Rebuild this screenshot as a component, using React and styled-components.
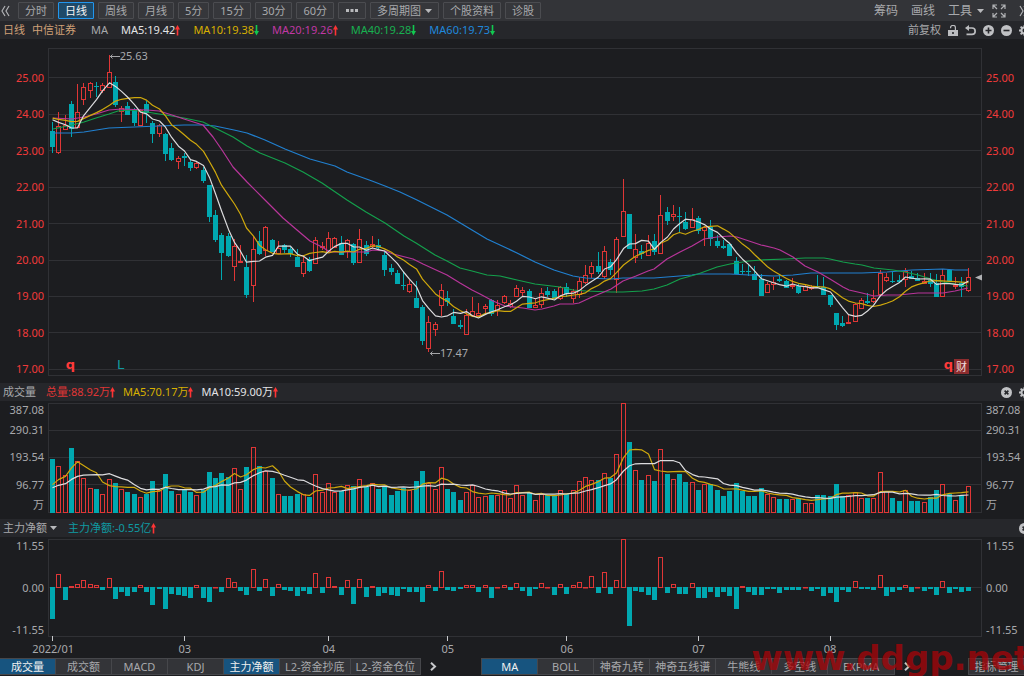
import React, { Component } from 'react'
import styled, { createGlobalStyle } from 'styled-components';

const GlobalStyle = createGlobalStyle`
  * {
    box-sizing: border-box;
  }

  body {
    margin: 0;
    background-color: #1c1d20;
    color: #a8a9ac;
    font-family: "Noto Sans", "Noto Sans CJK SC", sans-serif;
    font-size: 11px;
    line-height: 16px;
    overflow-x: hidden;
  }

  button, select {
    font: inherit;
    color: inherit;
    cursor: pointer;
  }
`;

const RED = '#e03636';
const TEAL = '#00a8b0';
const WHITE = '#dcdcde';
const YELLOW = '#cfa80c';
const MAGENTA = '#b8359a';
const GREEN = '#14a04c';
const BLUE = '#2180d0';

const Page = styled.main`
  width: 100%;
  overflow: hidden;
`;

const Toolbar = styled.header`
  display: flex;
  justify-content: space-between;
  align-items: center;
  height: 21px;
  padding-left: 1px;
  background-color: #333438;
`;

const Group = styled.div`
  display: flex;
  align-items: center;
  flex-shrink: 0;
  gap: ${props => props.$gap || 0}px;
`;

const PeriodButton = styled.button`
  display: flex;
  align-items: center;
  justify-content: center;
  gap: 4px;
  height: 17px;
  min-width: 28px;
  padding: 0 6px;
  white-space: nowrap;
  line-height: 15px;
  border: 1px solid ${props => props.$active ? '#2196ee' : '#4b4c50'};
  border-radius: 1px;
  background-color: ${props => props.$active ? '#1e4a69' : '#36373b'};
  color: ${props => props.$active ? '#f4f4f4' : '#a8a9ac'};
`;

const PlainButton = styled.button`
  display: flex;
  align-items: center;
  gap: 5px;
  padding: 0;
  border: 0;
  background: none;
  white-space: nowrap;
  font-size: ${props => props.$size || 11}px;
`;

const EdgeButton = styled(PlainButton)`
  margin-right: -6px;
`;

const InfoBar = styled.div`
  display: flex;
  justify-content: space-between;
  align-items: center;
  height: 18px;
  padding-left: 3px;
  background-color: #26272b;
  white-space: nowrap;
`;

const Reading = styled.span`
  display: inline-flex;
  align-items: center;
  color: ${props => props.$color};
`;

const Stock = styled.span`
  color: #d0a078;
  margin-right: ${props => props.$space || 0}px;
`;

const Title = styled.span`
  margin-right: 2px;
`;

const Picker = styled.label`
  display: flex;
  align-items: center;
  gap: 3px;

  select {
    appearance: none;
    padding: 0;
    border: 0;
    background: none;
  }
`;

const Panel = styled.section`
  display: grid;
  grid-template-columns: 48px minmax(0, 1fr) 42px;
`;

const Plot = styled.div`
  position: relative;
  padding: ${props => props.$padding};

  > svg {
    display: block;
    width: 100%;
    height: ${props => props.$height}px;
  }
`;

const Axis = styled.div`
  display: flex;
  flex-direction: column;
  justify-content: space-between;
  padding: ${props => props.$padding};
  text-align: ${props => props.$side};
  color: ${props => props.$color || '#a8a9ac'};
`;

const VolumeAxis = styled(Axis)`
  display: grid;
  grid-template-rows: 18px 22px 32px 23px 18px;
  justify-content: stretch;
  align-items: center;
`;

const Annotation = styled.span`
  position: absolute;
  left: ${props => props.$left}%;
  top: ${props => props.$top}px;
  display: flex;
  align-items: center;
`;

const Mark = styled.span`
  position: absolute;
  left: ${props => props.$left}%;
  top: 318px;
  font-family: "DejaVu Sans", sans-serif;
  font-size: 13px;
  font-weight: ${props => props.$bold ? 'bold' : 'normal'};
  color: ${props => props.$color};
`;

const Badge = styled.span`
  position: absolute;
  left: 97%;
  top: 320px;
  width: 15px;
  height: 15px;
  background-color: #8c2c2e;
  color: #f0dcdc;
  line-height: 15px;
  text-align: center;
`;

const Months = styled.div`
  display: grid;
  grid-template-columns: repeat(147, minmax(0, 1fr));
  height: 15px;
  padding: 0 11px 0 2px;
`;

const Month = styled.span`
  grid-column: ${props => props.$index + 1};
  justify-self: center;
  line-height: 13px;
`;

const Footer = styled.footer`
  position: relative;
  display: flex;
  align-items: center;
  height: 19px;
`;

const Tabs = styled.nav`
  display: flex;
  height: 17px;
  border: 1px solid #46474b;
  border-left-width: ${props => props.$flush ? 0 : 1}px;
`;

const Tab = styled.button`
  min-width: ${props => props.$wide ? 66 : 56}px;
  padding: 0 5px;
  border: 0;
  border-right: 1px solid #46474b;
  background-color: ${props => props.$active ? '#17547f' : '#333438'};
  color: ${props => props.$active ? '#f0f0f0' : '#a8a9ac'};
  line-height: 15px;
  white-space: nowrap;

  &:last-child {
    border-right: 0;
  }
`;

const MoreButton = styled(PlainButton)`
  justify-content: center;
  width: 24px;
  margin-right: ${props => props.$space || 0}px;
`;

const ManageButton = styled(Tab)`
  height: 17px;
  margin-left: auto;
  border: 1px solid #46474b;

  &:last-of-type {
    border-right: 0;
  }
`;

const Watermark = styled.span`
  position: absolute;
  right: -6px;
  bottom: 1px;
  font-family: "DejaVu Sans", sans-serif;
  font-size: 34px;
  font-weight: bold;
  line-height: 33px;
  color: rgba(168, 4, 8, 0.75);
  pointer-events: none;
`;

const Arrow = ({ down }) => (
  <svg width="5" height="11" viewBox="0 0 5 11" aria-hidden="true">
    <path
      d={down ? 'M1.7 0h1.6v6H5L2.5 10.5 0 6h1.7z' : 'M1.7 10.5h1.6V4.5H5L2.5 0 0 4.5h1.7z'}
      fill={down ? '#12c850' : '#ff3434'}
    />
  </svg>
)

const Caret = () => (
  <svg width="7" height="4" viewBox="0 0 7 4" aria-hidden="true"><path d="M0 0h7L3.5 4z" fill="#b8b9bc" /></svg>
)

const Chevrons = ({ right }) => (
  <svg width="11" height="12" viewBox="0 0 11 12" fill="none" stroke="#b0b1b4" strokeWidth="1.2" aria-hidden="true">
    <path d={right ? 'M1 1l3 5-3 5M5 1l3 5-3 5' : 'M4 1L1 6l3 5M8 1L5 6l3 5'} />
  </svg>
)

const Next = () => (
  <svg width="7" height="9" viewBox="0 0 7 9" fill="none" stroke="#c8c9cc" strokeWidth="2" aria-hidden="true">
    <path d="M1 .8l4 3.7-4 3.7" />
  </svg>
)

const Dots = () => (
  <svg width="12" height="3" viewBox="0 0 12 3" fill="#b8b9bc" aria-hidden="true">
    <path d="M0 0h3v3H0zM4.5 0h3v3h-3zM9 0h3v3H9z" />
  </svg>
)

const Expand = () => (
  <svg width="14" height="14" viewBox="0 0 14 14" fill="none" stroke="#b0b1b4" strokeWidth="1.2" aria-hidden="true">
    <path d="M1 5V1h4M1 1l4 4M9 1h4v4M13 1L9 5M1 9v4h4M1 13l4-4M13 9v4H9M13 13L9 9" />
  </svg>
)

const Lock = () => (
  <svg width="10" height="11" viewBox="0 0 10 11" aria-hidden="true">
    <path d="M2.6 3.2V2.4a2.4 2 0 0 1 4.8 0V5" fill="none" stroke="#bcbdc0" strokeWidth="1.2" />
    <path d="M0 5h10v6H0zM4.2 7v2h1.6V7z" fill="#bcbdc0" fillRule="evenodd" />
  </svg>
)

const Undo = () => (
  <svg width="11" height="11" viewBox="0 0 11 11" aria-hidden="true">
    <path d="M3 3h4a3 3 0 0 1 0 6.3H1.5" fill="none" stroke="#bcbdc0" strokeWidth="1.7" />
    <path d="M0 3l4-3v6z" fill="#bcbdc0" />
  </svg>
)

const SIGNS = {
  plus: 'M2.5 5.5h6M5.5 2.5v6',
  minus: 'M2.5 5.5h6',
  close: 'M3.6 3.6l3.8 3.8M7.4 3.6L3.6 7.4',
};

const Round = ({ sign }) => (
  <svg width="11" height="11" viewBox="0 0 11 11" aria-hidden="true">
    <circle cx="5.5" cy="5.5" r="5.5" fill="#c0c1c4" />
    <path d={SIGNS[sign]} stroke="#26272b" strokeWidth="1.6" />
  </svg>
)

const Gear = () => (
  <svg width="11" height="11" viewBox="0 0 11 11" fill="none" stroke="#c0c1c4" aria-hidden="true">
    <circle cx="5.5" cy="5.5" r="3" strokeWidth="2" />
    <path d="M5.5 0v2M5.5 9v2M0 5.5h2M9 5.5h2M1.6 1.6L3 3M8 8l1.4 1.4M9.4 1.6L8 3M3 8L1.6 9.4" strokeWidth="1.8" />
  </svg>
)

const Pointer = () => (
  <svg width="10" height="5" viewBox="0 0 10 5" fill="none" stroke="#a4a5a8" aria-hidden="true">
    <path d="M0 2.5h10M2.5 .5l-2 2 2 2" />
  </svg>
)

// high, body top, body bottom, low, 1 when the day closed up
const CANDLES = [
  [122, 131, 147, 153, 0], [112, 126, 152, 154, 1], [115, 125, 129, 130, 1], [101, 104, 129, 137, 0], [84, 112, 127, 128, 1],
  [83, 87, 99, 105, 1], [82, 83, 90, 98, 1], [82, 86, 87, 97, 0], [83, 85, 90, 93, 1], [55, 72, 87, 87, 1],
  [76, 82, 105, 107, 0], [106, 108, 111, 122, 1], [102, 106, 115, 115, 0], [108, 109, 123, 126, 0], [109, 110, 125, 126, 1],
  [101, 104, 113, 123, 0], [121, 123, 134, 143, 0], [124, 125, 133, 137, 1], [133, 134, 154, 161, 0], [143, 148, 160, 161, 0],
  [156, 158, 161, 169, 1], [153, 156, 158, 166, 0], [159, 162, 168, 171, 0], [161, 163, 167, 169, 1], [167, 170, 181, 183, 0],
  [185, 185, 217, 222, 0], [210, 215, 240, 242, 0], [233, 235, 253, 280, 0], [233, 236, 256, 257, 0], [239, 246, 266, 281, 1],
  [245, 261, 262, 263, 1], [255, 267, 295, 298, 0], [236, 249, 285, 302, 1], [231, 241, 254, 255, 0], [226, 227, 250, 256, 1],
  [239, 240, 252, 252, 0], [241, 248, 253, 254, 1], [244, 245, 250, 253, 0], [247, 249, 254, 257, 0], [249, 257, 267, 267, 0],
  [255, 262, 273, 277, 1], [257, 259, 271, 272, 0], [237, 240, 263, 264, 1], [242, 246, 247, 250, 1], [232, 238, 252, 253, 1],
  [237, 238, 247, 248, 1], [236, 243, 255, 255, 0], [239, 240, 251, 258, 1], [243, 244, 263, 265, 0], [229, 239, 262, 263, 1],
  [241, 245, 254, 256, 0], [236, 244, 246, 248, 1], [239, 245, 248, 250, 0], [252, 255, 270, 276, 0], [264, 268, 272, 275, 0],
  [270, 273, 284, 284, 0], [271, 285, 286, 290, 0], [280, 284, 291, 293, 1], [281, 298, 308, 308, 0], [305, 307, 341, 345, 0],
  [316, 322, 348, 352, 1], [322, 324, 329, 336, 1], [284, 290, 305, 316, 1], [291, 298, 302, 306, 0], [309, 316, 324, 324, 0],
  [320, 325, 327, 329, 0], [309, 315, 334, 335, 1], [297, 311, 315, 316, 1], [303, 313, 315, 317, 1], [304, 306, 308, 313, 1],
  [299, 300, 314, 316, 0], [300, 305, 310, 316, 1], [295, 296, 302, 304, 1], [300, 303, 306, 308, 1], [285, 288, 296, 297, 1],
  [287, 290, 292, 296, 1], [289, 291, 308, 308, 0], [299, 305, 307, 308, 1], [288, 293, 304, 308, 1], [287, 291, 295, 297, 0],
  [289, 291, 299, 299, 0], [286, 287, 298, 300, 1], [283, 287, 294, 297, 0], [289, 291, 298, 303, 1], [277, 281, 294, 298, 1],
  [265, 275, 282, 284, 1], [262, 266, 273, 278, 1], [252, 266, 272, 274, 0], [246, 251, 276, 279, 1], [259, 262, 270, 275, 0],
  [237, 239, 279, 293, 1], [179, 211, 236, 237, 1], [214, 214, 249, 249, 0], [234, 249, 257, 263, 1], [245, 251, 254, 259, 0],
  [235, 243, 255, 256, 1], [234, 241, 252, 255, 0], [195, 215, 253, 253, 1], [207, 212, 221, 225, 0], [205, 214, 216, 221, 1],
  [207, 216, 217, 232, 0], [212, 222, 229, 230, 0], [208, 219, 227, 228, 1], [216, 218, 231, 234, 0], [226, 227, 230, 246, 1],
  [220, 227, 239, 246, 0], [235, 241, 246, 248, 0], [240, 246, 248, 249, 0], [243, 244, 256, 256, 0], [257, 261, 274, 274, 0],
  [264, 271, 272, 274, 0], [265, 271, 272, 276, 0], [266, 274, 280, 280, 0], [274, 279, 296, 296, 0], [282, 284, 292, 293, 1],
  [277, 282, 284, 290, 1], [275, 279, 281, 282, 0], [280, 281, 288, 288, 0], [278, 285, 286, 289, 1], [284, 286, 293, 294, 0],
  [285, 286, 290, 291, 1], [285, 287, 288, 290, 1], [275, 286, 287, 288, 0], [277, 287, 295, 295, 0], [295, 295, 305, 307, 0],
  [313, 313, 325, 330, 0], [316, 323, 326, 327, 0], [315, 322, 323, 324, 1], [303, 304, 321, 322, 1], [298, 300, 308, 308, 1],
  [293, 301, 303, 304, 0], [290, 298, 301, 303, 1], [270, 273, 294, 295, 1], [273, 277, 280, 282, 1], [272, 281, 282, 283, 0],
  [275, 280, 282, 283, 0], [268, 271, 279, 287, 1], [271, 276, 279, 279, 0], [273, 278, 281, 281, 0], [273, 281, 283, 283, 1],
  [273, 280, 284, 287, 0], [274, 283, 297, 297, 0], [269, 275, 296, 297, 1], [270, 270, 281, 281, 0], [277, 285, 286, 289, 1],
  [277, 283, 287, 297, 0], [268, 277, 290, 292, 1],
];

const VOLUMES = [
  54, 47, 38, 65, 52, 35, 25, 24, 19, 34, 30, 24, 21, 19, 16, 19, 32, 23, 39, 22, 19, 23, 21, 18, 23, 41, 35, 40, 36, 45,
  24, 46, 66, 47, 42, 35, 19, 17, 17, 19, 19, 16, 39, 21, 30, 21, 22, 28, 27, 34, 26, 30, 24, 27, 18, 22, 25, 23, 32, 42,
  30, 24, 46, 24, 21, 13, 21, 28, 16, 17, 18, 18, 23, 15, 28, 18, 20, 13, 19, 18, 17, 23, 19, 23, 32, 36, 33, 33, 40, 35,
  59, 110, 71, 43, 33, 38, 32, 64, 39, 34, 39, 31, 31, 23, 29, 29, 23, 17, 22, 30, 22, 17, 17, 25, 19, 16, 14, 14, 14, 15,
  10, 10, 18, 18, 17, 29, 17, 18, 21, 15, 15, 15, 41, 22, 15, 12, 23, 12, 12, 11, 16, 23, 29, 19, 13, 18, 27,
];

const NET = [
  -31, 14, -12, 2, 4, 8, 4, 3, -2, 10, -11, -4, -8, -4, 3, -4, -17, -1, -21, -6, -7, -8, -10, 3, -10, -14, 1, -4, 10, 6,
  -3, -7, 19, -3, 9, -8, 4, -2, -3, -8, -3, -6, 15, -5, 11, 2, -7, 8, -16, 9, -9, 2, -8, -5, -7, -8, -1, -4, -4, -14,
  3, -3, 17, -2, -3, -1, 3, 3, -4, 3, -10, 1, 3, -2, 5, -3, -8, -1, 5, 1, -7, 4, -6, 3, 6, 1, 12, -5, 16, -6,
  8, 49, -38, -3, -4, -7, -12, 31, -5, 4, -6, -6, 5, -10, -10, -4, -9, -4, -8, -21, 2, -4, -7, -7, -1, -1, -5, -2, -2, -2,
  1, -3, -1, -8, -5, -14, -2, -4, 7, -1, -1, -2, 13, -8, -4, -2, 3, -4, 1, -3, -1, -7, 7, -5, -1, -4, -3,
];

const MA20 = '53,118 72,119 84,117 96,114 109,110 122,109 147,110 159,111 172,115 184,119 203,125 213,137 222,150 233,167 247,182 265,200 283,218 297,230 310,241 322,247 330,252 366,252 373,250 385,251 393,254 413,259 423,264 447,275 460,283 472,290 480,294 493,301 505,306 523,308 535,310 542,309 554,306 560,304 573,304 579,303 592,297 604,292 611,289 617,285 623,281 636,276 648,271 654,269 667,259 680,252 692,246 704,239 717,237 730,236 737,237 749,241 761,245 774,248 780,250 793,257 805,266 818,272 830,279 843,287 849,290 862,293 874,296 887,295 899,295 918,293 943,293 955,291 968,288';
const MA40 = '53,129 72,125 84,122 96,118 109,114 118,111 130,110 147,112 159,114 172,116 184,118 203,122 213,127 233,137 247,146 260,153 285,163 303,172 322,183 347,200 366,212 385,223 404,236 416,243 435,255 447,261 460,268 472,271 487,275 500,276 517,280 535,284 560,287 573,290 586,291 611,292 623,292 642,291 654,289 667,285 680,279 698,274 717,267 730,264 749,261 761,260 786,259 805,258 824,258 830,259 843,262 855,264 862,265 874,268 893,270 905,272 918,275 931,279 943,282 955,284 968,286';
const MA60 = '53,133 72,133 84,132 109,128 134,127 159,126 184,125 203,125 215,126 234,130 247,133 265,140 285,149 310,159 335,166 347,172 372,181 385,186 400,192 417,200 435,209 447,215 472,230 487,239 500,245 517,253 535,262 554,270 573,276 579,277 586,278 611,279 623,278 654,278 667,277 692,275 698,274 730,274 749,275 774,276 793,275 811,273 830,273 862,273 887,272 912,270 943,269 955,270 968,270';

const STEP = 6.27;
const center = i => Math.floor(52.6 + STEP * i) + 0.5;

// moving average over n values; history stands in for the days before the first bar
const average = (values, n, history, toY) => {
  const all = Array(n - 1).fill(history).concat(values);
  return values.map((v, i) => {
    const sum = all.slice(i, i + n).reduce((a, b) => a + b, 0);
    return `${center(i)},${toY(sum / n).toFixed(1)}`;
  }).join(' ');
};

const CLOSES = CANDLES.map(c => c[4] ? c[1] : c[2]);

const Line = ({ points, color }) => (
  <polyline points={points} fill="none" stroke={color} strokeWidth="1.2" strokeLinejoin="round" />
)

const Bar = ({ i, top, bottom, up }) => (
  up
    ? <rect x={center(i) - 2} y={top + 0.5} width="4" height={Math.max(bottom - top - 1, 0.5)} fill="none" stroke={RED} />
    : <rect x={center(i) - 2.5} y={top} width="5" height={Math.max(bottom - top, 1)} fill={TEAL} />
)

const Grid = ({ top, bottom, rows }) => (
  <g stroke="#303135" fill="none">
    <rect x="48.5" y={top + 0.5} width="933" height={bottom - top - 1} />
    {rows.map(y => <path key={y} d={`M48 ${y + 0.5}H982`} />)}
  </g>
)

const PriceChart = () => (
  <svg viewBox="48 48 934 328" preserveAspectRatio="none" role="img" aria-label="日线">
    <Grid top={48} bottom={376} rows={[77, 114, 150, 187, 223, 260, 296, 332, 369]} />
    {CANDLES.map(([high, top, bottom, low, up], i) => (
      <g key={i}>
        <path
          d={`M${center(i)} ${high}V${top}M${center(i)} ${bottom}V${low}`}
          stroke={up ? RED : TEAL}
        />
        <Bar i={i} top={top} bottom={up ? bottom + 1 : bottom} up={up} />
      </g>
    ))}
    <Line points={MA60} color={BLUE} />
    <Line points={MA40} color={GREEN} />
    <Line points={MA20} color={MAGENTA} />
    <Line points={average(CLOSES, 10, 115, y => y)} color={YELLOW} />
    <Line points={average(CLOSES, 5, 113, y => y)} color={WHITE} />
    <path d="M975 277.5l7-3v6z" fill="#b0b1b4" />
  </svg>
)

const VolumeChart = () => (
  <svg viewBox="48 403 934 110" preserveAspectRatio="none" role="img" aria-label="成交量">
    <Grid top={403} bottom={513} rows={[430, 457, 484]} />
    {VOLUMES.map((v, i) => <Bar key={i} i={i} top={513 - v} bottom={513} up={CANDLES[i][4]} />)}
    <Line points={average(VOLUMES, 5, 22, v => 513 - v)} color={YELLOW} />
    <Line points={average(VOLUMES, 10, 22, v => 513 - v)} color={WHITE} />
  </svg>
)

const MONTHS = [[0, '2022/01'], [21, '03'], [44, '04'], [63, '05'], [82, '06'], [103, '07'], [124, '08']];

const NetChart = () => (
  <svg viewBox="48 539 934 103" preserveAspectRatio="none" role="img" aria-label="主力净额">
    <Grid top={539} bottom={637} rows={[587]} />
    {NET.map((v, i) => (
      <Bar key={i} i={i} top={v > 0 ? 588 - v : 587} bottom={v > 0 ? 588 : 588 - v} up={v > 0} />
    ))}
    {MONTHS.map(([i]) => <path key={i} d={`M${center(i)} 636v5`} stroke="#c8c9cc" />)}
  </svg>
)

const PERIODS = ['分时', '日线', '周线', '月线', '5分', '15分', '30分', '60分'];
const PRICES = ['25.00', '24.00', '23.00', '22.00', '21.00', '20.00', '19.00', '18.00', '17.00'];
const AMOUNTS = ['387.08', '290.31', '193.54', '96.77', '万'];
const FLOWS = ['11.55', '0.00', '-11.55'];
const AVERAGES = [
  ['MA5:19.42', '#e4e4e6', false],
  ['MA10:19.38', '#d8b000', true],
  ['MA20:19.26', '#c038a4', false],
  ['MA40:19.28', '#18b050', true],
  ['MA60:19.73', '#2088dc', true],
];
const LEFT_TABS = ['成交量', '成交额', 'MACD', 'KDJ', '主力净额', 'L2-资金抄底', 'L2-资金仓位'];
const RIGHT_TABS = ['MA', 'BOLL', '神奇九转', '神奇五线谱', '牛熊线', '多空线', 'EXPMA'];

const labels = list => list.map(text => <span key={text}>{text}</span>);

class App extends Component {
  state = {
    period: '日线',
    left: ['成交量', '主力净额'],
    right: 'MA',
  }

  toggle = (name) => {
    const { left } = this.state;
    this.setState({ left: left.includes(name) ? left.filter(t => t !== name) : [...left, name] });
  }

  render() {
    const { period, left, right } = this.state;

    return (
      <Page>
        <GlobalStyle />
        <Toolbar>
          <Group $gap={6}>
            <PlainButton aria-label="收起"><Chevrons /></PlainButton>
            <Group $gap={4}>
              {PERIODS.map(name => (
                <PeriodButton key={name} $active={name === period} onClick={() => this.setState({ period: name })}>{name}</PeriodButton>
              ))}
              <PeriodButton aria-label="更多周期"><Dots /></PeriodButton>
              <PeriodButton>多周期图<Caret /></PeriodButton>
              <PeriodButton>个股资料</PeriodButton>
              <PeriodButton>诊股</PeriodButton>
            </Group>
          </Group>
          <Group $gap={13}>
            <PlainButton $size={12}>筹码</PlainButton>
            <PlainButton $size={12}>画线</PlainButton>
            <Group $gap={8}>
              <PlainButton $size={12}>工具<Caret /></PlainButton>
              <PlainButton aria-label="全屏"><Expand /></PlainButton>
            </Group>
            <EdgeButton aria-label="展开"><Chevrons right /></EdgeButton>
          </Group>
        </Toolbar>

        <InfoBar>
          <Group $gap={13}>
            <span><Stock $space={7}>日线</Stock><Stock $space={2}>中信证券</Stock></span>
            <span>MA</span>
            {AVERAGES.map(([text, color, down]) => (
              <Reading key={text} $color={color}>{text}<Arrow down={down} /></Reading>
            ))}
          </Group>
          <Group $gap={7}>
            <PlainButton>前复权</PlainButton>
            <PlainButton aria-label="锁定"><Lock /></PlainButton>
            <PlainButton aria-label="撤销"><Undo /></PlainButton>
            <PlainButton aria-label="放大"><Round sign="plus" /></PlainButton>
            <PlainButton aria-label="缩小"><Round sign="minus" /></PlainButton>
            <EdgeButton aria-label="设置"><Gear /></EdgeButton>
          </Group>
        </InfoBar>
        <Panel>
          <Axis $side="right" $color="#f03a3a" $padding="31px 4px 6px 0">{labels(PRICES)}</Axis>
          <Plot $height={328} $padding="9px 0 7px">
            <PriceChart />
            <Annotation $left={6.6} $top={9}><Pointer />25.63</Annotation>
            <Annotation $left={40.9} $top={306}><Pointer />17.47</Annotation>
            <Mark $left={1.9} $color="#ff3a3a" $bold>q</Mark>
            <Mark $left={7.4} $color="#0f9aa2">L</Mark>
            <Mark $left={95.9} $color="#ff3a3a" $bold>q</Mark>
            <Badge>财</Badge>
          </Plot>
          <Axis $side="left" $color="#f03a3a" $padding="31px 0 6px 4px">{labels(PRICES)}</Axis>
        </Panel>

        <InfoBar>
          <Group $gap={8}>
            <Title>成交量</Title>
            <Reading $color={RED}>总量:88.92万<Arrow /></Reading>
            <Reading $color="#d8b000">MA5:70.17万<Arrow /></Reading>
            <Reading $color="#e4e4e6">MA10:59.00万<Arrow /></Reading>
          </Group>
          <Group $gap={7}>
            <PlainButton aria-label="关闭"><Round sign="close" /></PlainButton>
            <EdgeButton aria-label="设置"><Gear /></EdgeButton>
          </Group>
        </InfoBar>
        <Panel>
          <VolumeAxis $side="right" $padding="0 4px 0 0">{labels(AMOUNTS)}</VolumeAxis>
          <Plot $height={110} $padding="2px 0 6px"><VolumeChart /></Plot>
          <VolumeAxis $side="left" $padding="0 0 0 4px">{labels(AMOUNTS)}</VolumeAxis>
        </Panel>

        <InfoBar>
          <Group $gap={11}>
            <Picker>
              <select aria-label="指标" defaultValue="主力净额">
                <option>主力净额</option>
              </select>
              <Caret />
            </Picker>
            <Reading $color="#0f9aa2">主力净额:-0.55亿<Arrow /></Reading>
          </Group>
          <EdgeButton aria-label="关闭"><Round sign="close" /></EdgeButton>
        </InfoBar>
        <Panel>
          <Axis $side="right" $padding="1px 4px 19px 0">{labels(FLOWS)}</Axis>
          <Plot $height={103} $padding="2px 0 0">
            <NetChart />
            <Months>
              {MONTHS.map(([i, text]) => <Month key={i} $index={i}>{text}</Month>)}
            </Months>
          </Plot>
          <Axis $side="left" $padding="1px 0 19px 4px">{labels(FLOWS)}</Axis>
        </Panel>

        <Footer>
          <Tabs $flush aria-label="副图指标">
            {LEFT_TABS.map(name => (
              <Tab key={name} $active={left.includes(name)} onClick={() => this.toggle(name)}>{name}</Tab>
            ))}
          </Tabs>
          <MoreButton $space={36} aria-label="更多副图指标"><Next /></MoreButton>
          <Tabs aria-label="主图指标">
            {RIGHT_TABS.map(name => (
              <Tab
                key={name}
                $active={name === right}
                $wide={name === 'EXPMA'}
                onClick={() => this.setState({ right: name })}
              >
                {name}
              </Tab>
            ))}
          </Tabs>
          <MoreButton aria-label="更多主图指标"><Next /></MoreButton>
          <ManageButton>指标管理</ManageButton>
          <Watermark>www.ddgp.net</Watermark>
        </Footer>
      </Page>
    );
  }
}

export default App;
